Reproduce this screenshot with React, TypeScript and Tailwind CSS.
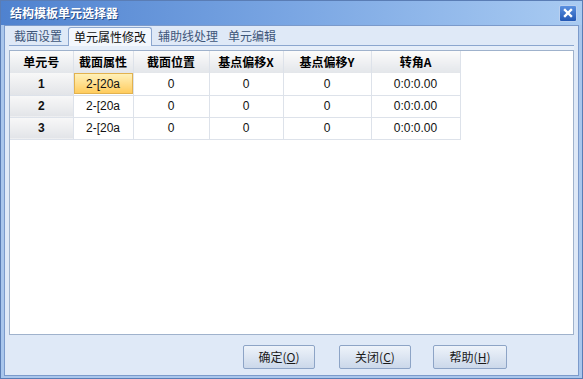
import React from "react";

const cjk = { fontFamily: '"Noto Sans CJK SC", "Liberation Sans", sans-serif' };
const num = { fontFamily: '"Liberation Sans", "Noto Sans CJK SC", sans-serif' };

const columns = [
  { label: "单元号", w: "w-[63px]" },
  { label: "截面属性", w: "w-[60px]" },
  { label: "截面位置", w: "w-[76px]" },
  { label: "基点偏移X", w: "w-[74px]" },
  { label: "基点偏移Y", w: "w-[88px]" },
  { label: "转角A", w: "w-[89px]" },
];

const rows = [
  { id: "1", sec: "2-[20a", pos: "0", x: "0", y: "0", a: "0:0:0.00" },
  { id: "2", sec: "2-[20a", pos: "0", x: "0", y: "0", a: "0:0:0.00" },
  { id: "3", sec: "2-[20a", pos: "0", x: "0", y: "0", a: "0:0:0.00" },
];

const tabs = ["截面设置", "单元属性修改", "辅助线处理", "单元编辑"];

const buttons = [
  { text: "确定", key: "O", w: "w-[72px]", ml: "ml-0" },
  { text: "关闭", key: "C", w: "w-[72px]", ml: "ml-[24px]" },
  { text: "帮助", key: "H", w: "w-[74px]", ml: "ml-[22px]" },
];

const App = () => {
  return (
    <div className="w-[583px] h-[379px] border border-[#5a7db5] bg-[#a9c6ec] flex flex-col overflow-hidden" style={cjk}>
      {/* Title bar */}
      <div className="h-[24px] shrink-0 flex items-center justify-between pl-[9px] pr-[5px] bg-linear-to-r from-[#4f82cf] via-[#7aa6e3] to-[#a9cbf2]">
        <span className="text-[12px] font-bold text-white [text-shadow:1px_1px_0_#2a4f8a] leading-none">
          结构模板单元选择器
        </span>
        <div className="w-[18px] h-[17px] rounded-[2px] border border-[#b9d0f0] bg-linear-to-b from-[#5a90e0] to-[#2358b4] flex items-center justify-center">
          <svg width="10" height="10" viewBox="0 0 10 10">
            <path d="M2 2 L8 8 M8 2 L2 8" stroke="white" strokeWidth="2.4" strokeLinecap="square" />
          </svg>
        </div>
      </div>

      {/* Body frame */}
      <div className="flex-1 mx-[3px] mb-[2px] border border-[#7b9acb] bg-[#dfe9f7] flex flex-col px-[4px]">
        {/* Tabs */}
        <div className="h-[19px] shrink-0 flex items-end text-[12px] leading-none">
          {tabs.map((t, i) =>
            i === 1 ? (
              <div
                key={t}
                className="h-[19px] px-[5px] mx-[1px] flex items-center border border-b-0 border-[#8ba6cf] rounded-t-[3px] bg-[#f3f7fd] text-[#111] relative top-[1px]"
              >
                {t}
              </div>
            ) : (
              <div key={t} className="h-[18px] px-[3px] mx-[2px] flex items-center text-[#3e5679]">
                {t}
              </div>
            )
          )}
        </div>

        {/* Panel */}
        <div className="h-[290px] shrink-0 border-t border-[#8ba6cf] pt-[4px] bg-[#e6eef9]">
          <div className="h-full border border-[#9fb2cc] bg-white">
            <table className="border-collapse text-[12px] leading-none">
              <thead>
                <tr className="h-[22px]">
                  {columns.map((c) => (
                    <th
                      key={c.label}
                      className={`${c.w} p-0 border-r border-[#dde2ea] bg-linear-to-b from-[#fbfbfb] to-[#e3e6ea] font-bold text-[#000]`}
                    >
                      {c.label}
                    </th>
                  ))}
                </tr>
              </thead>
              <tbody style={num}>
                {rows.map((r) => (
                  <tr key={r.id} className="h-[22px]">
                    <td className="p-0 text-center font-bold border-b border-r border-[#dde2ea] bg-linear-to-b from-[#f8f8f8] to-[#e2e4e8] text-[#111]">
                      {r.id}
                    </td>
                    <td className="p-0 border-b border-r border-[#dde2ea] text-center text-[#111]">
                      {r.id === "1" ? (
                        <div className="h-[21px] flex items-center justify-center border border-[#e2b24f] bg-linear-to-b from-[#fff1b8] to-[#ffcc5c]">
                          {r.sec}
                        </div>
                      ) : (
                        r.sec
                      )}
                    </td>
                    <td className="p-0 border-b border-r border-[#dde2ea] text-center text-[#111]">{r.pos}</td>
                    <td className="p-0 border-b border-r border-[#dde2ea] text-center text-[#111]">{r.x}</td>
                    <td className="p-0 border-b border-r border-[#dde2ea] text-center text-[#111]">{r.y}</td>
                    <td className="p-0 border-b border-r border-[#dde2ea] text-center text-[#111]">{r.a}</td>
                  </tr>
                ))}
              </tbody>
            </table>
          </div>
        </div>

        {/* Buttons */}
        <div className="flex-1 flex items-start pt-[10px] pl-[234px] text-[12px] text-[#1a1a1a]">
          {buttons.map((b) => (
            <button
              key={b.key}
              className={`h-[24px] ${b.w} ${b.ml} rounded-[2px] border border-[#8da4c6] bg-linear-to-b from-[#eef3fa] to-[#cbd8ea] flex items-center justify-center leading-none`}
            >
              {b.text}(<span className="underline">{b.key}</span>)
            </button>
          ))}
        </div>
      </div>
    </div>
  );
};

export default App;
